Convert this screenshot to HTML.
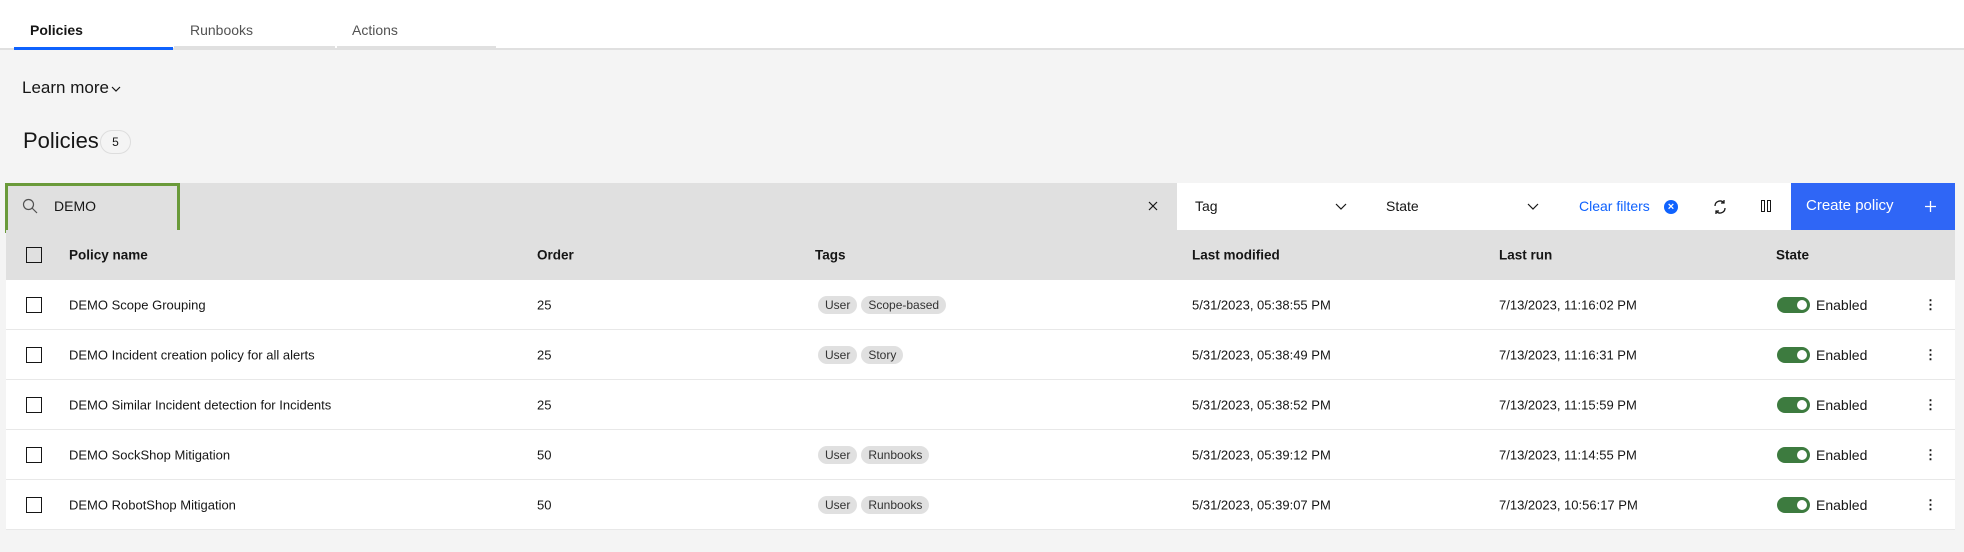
<!DOCTYPE html>
<html><head><style>
*{box-sizing:border-box;margin:0;padding:0}
body{width:1964px;height:552px;background:#f4f4f4;font-family:"Liberation Sans",sans-serif;color:#161616;position:relative;overflow:hidden}
.a{position:absolute;white-space:nowrap}
.top{position:absolute;left:0;top:0;width:1964px;height:50px;background:#fff;border-bottom:2px solid #e0e0e0}
.tab{position:absolute;top:46px;height:4px;background:#e0e0e0}
.row{position:absolute;left:6px;width:1949px;height:50px;background:#fff;border-bottom:1px solid #e8e8e8;font-size:13px}
.row>*{position:absolute;top:50%;transform:translateY(-50%);white-space:nowrap}
.cb{width:16px;height:16px;border:1.5px solid #161616;left:20px}
.chip{display:inline-block;background:#e0e0e0;border-radius:9px;height:18px;line-height:18px;padding:0 7px;font-size:12px;color:#333;margin-right:4px;font-style:normal}
.tg{left:1771px;width:33px;height:16px;border-radius:8px;background:#3d7b3f}
.tg:after{content:"";position:absolute;right:3px;top:3px;width:10px;height:10px;border-radius:50%;background:#fff}
.hd{position:absolute;left:6px;top:230px;width:1949px;height:50px;background:#e0e0e0;font-size:13.5px;font-weight:bold}
.hd>*{position:absolute;top:50%;transform:translateY(-50%)}
</style></head><body>
<div class="top"></div>
<div class="tab" style="left:14px;width:159px;background:#0f62fe;height:3px;top:47px"></div>
<div class="tab" style="left:174px;width:161px"></div>
<div class="tab" style="left:337px;width:159px"></div>
<div class="a" style="left:30px;top:22px;font-size:14px;font-weight:bold">Policies</div>
<div class="a" style="left:190px;top:22px;font-size:14px;color:#525252">Runbooks</div>
<div class="a" style="left:352px;top:22px;font-size:14px;color:#525252">Actions</div>
<div class="a" style="left:22px;top:78px;font-size:17px">Learn more</div>
<svg class="a" style="left:111px;top:84px" width="10" height="10" viewBox="0 0 10 10"><path d="M1 3l4 4 4-4" fill="none" stroke="#161616" stroke-width="1.2"/></svg>
<div class="a" style="left:23px;top:128px;font-size:22px">Policies</div>
<div class="a" style="left:100px;top:130px;width:31px;height:24px;border:1px solid #ddd;border-radius:12px;font-size:12px;text-align:center;line-height:22px">5</div>
<div class="a" style="left:6px;top:183px;width:1171px;height:47px;background:#e0e0e0"></div>
<div class="a" style="left:5px;top:183px;width:175px;height:50px;border:3px solid #6a9a3a"></div>
<svg class="a" style="left:22px;top:198px" width="16" height="16" viewBox="0 0 16 16"><circle cx="6.5" cy="6.5" r="5" fill="none" stroke="#525252" stroke-width="1.2"/><path d="M10 10l5 5" stroke="#525252" stroke-width="1.2"/></svg>
<div class="a" style="left:54px;top:198px;font-size:14px">DEMO</div>
<svg class="a" style="left:1148px;top:201px" width="10" height="10" viewBox="0 0 10 10"><path d="M1 1l8 8M9 1l-8 8" stroke="#161616" stroke-width="1.2"/></svg>
<div class="a" style="left:1177px;top:183px;width:614px;height:47px;background:#fff"></div>
<div class="a" style="left:1195px;top:198px;font-size:14px">Tag</div>
<svg class="a" style="left:1335px;top:201px" width="12" height="10" viewBox="0 0 12 10"><path d="M1 3l5 5 5-5" fill="none" stroke="#161616" stroke-width="1.2"/></svg>
<div class="a" style="left:1386px;top:198px;font-size:14px">State</div>
<svg class="a" style="left:1527px;top:201px" width="12" height="10" viewBox="0 0 12 10"><path d="M1 3l5 5 5-5" fill="none" stroke="#161616" stroke-width="1.2"/></svg>
<div class="a" style="left:1579px;top:198px;font-size:14px;color:#0f62fe">Clear filters</div>
<div class="a" style="left:1664px;top:200px;width:14px;height:14px;border-radius:50%;background:#0f62fe;color:#fff;font-size:11px;text-align:center;line-height:14px;font-weight:bold">&#215;</div>
<svg class="a" style="left:1712px;top:199px" width="16" height="16" viewBox="0 0 16 16" fill="none" stroke="#161616" stroke-width="1.3"><path d="M3 7a5 5 0 0 1 9-3M13 9a5 5 0 0 1-9 3"/><path d="M12 1v3h-3M4 15v-3h3"/></svg>
<div class="a" style="left:1761px;top:200px;width:4px;height:12px;border:1.4px solid #161616"></div>
<div class="a" style="left:1767px;top:200px;width:4px;height:12px;border:1.4px solid #161616"></div>
<div class="a" style="left:1791px;top:183px;width:164px;height:47px;background:#2f66f6"></div>
<div class="a" style="left:1806px;top:197px;font-size:15px;color:#fff">Create policy</div>
<svg class="a" style="left:1925px;top:201px" width="11" height="11" viewBox="0 0 11 11"><path d="M5.5 0v11M0 5.5h11" stroke="#fff" stroke-width="1.3"/></svg>
<div class="hd"><div class="cb"></div><span style="left:63px">Policy name</span><span style="left:531px">Order</span><span style="left:809px">Tags</span><span style="left:1186px">Last modified</span><span style="left:1493px">Last run</span><span style="left:1770px">State</span></div>

<div class="row" style="top:280px"><div class="cb"></div><span style="left:63px">DEMO Scope Grouping</span><span style="left:531px">25</span><span style="left:812px"><i class="chip">User</i><i class="chip">Scope-based</i></span><span style="left:1186px">5/31/2023, 05:38:55 PM</span><span style="left:1493px">7/13/2023, 11:16:02 PM</span><div class="tg"></div><span style="left:1810px;font-size:14px">Enabled</span><span style="left:1918px;font-weight:bold">&#8942;</span></div>
<div class="row" style="top:330px"><div class="cb"></div><span style="left:63px">DEMO Incident creation policy for all alerts</span><span style="left:531px">25</span><span style="left:812px"><i class="chip">User</i><i class="chip">Story</i></span><span style="left:1186px">5/31/2023, 05:38:49 PM</span><span style="left:1493px">7/13/2023, 11:16:31 PM</span><div class="tg"></div><span style="left:1810px;font-size:14px">Enabled</span><span style="left:1918px;font-weight:bold">&#8942;</span></div>
<div class="row" style="top:380px"><div class="cb"></div><span style="left:63px">DEMO Similar Incident detection for Incidents</span><span style="left:531px">25</span><span style="left:1186px">5/31/2023, 05:38:52 PM</span><span style="left:1493px">7/13/2023, 11:15:59 PM</span><div class="tg"></div><span style="left:1810px;font-size:14px">Enabled</span><span style="left:1918px;font-weight:bold">&#8942;</span></div>
<div class="row" style="top:430px"><div class="cb"></div><span style="left:63px">DEMO SockShop Mitigation</span><span style="left:531px">50</span><span style="left:812px"><i class="chip">User</i><i class="chip">Runbooks</i></span><span style="left:1186px">5/31/2023, 05:39:12 PM</span><span style="left:1493px">7/13/2023, 11:14:55 PM</span><div class="tg"></div><span style="left:1810px;font-size:14px">Enabled</span><span style="left:1918px;font-weight:bold">&#8942;</span></div>
<div class="row" style="top:480px"><div class="cb"></div><span style="left:63px">DEMO RobotShop Mitigation</span><span style="left:531px">50</span><span style="left:812px"><i class="chip">User</i><i class="chip">Runbooks</i></span><span style="left:1186px">5/31/2023, 05:39:07 PM</span><span style="left:1493px">7/13/2023, 10:56:17 PM</span><div class="tg"></div><span style="left:1810px;font-size:14px">Enabled</span><span style="left:1918px;font-weight:bold">&#8942;</span></div>
</body></html>
